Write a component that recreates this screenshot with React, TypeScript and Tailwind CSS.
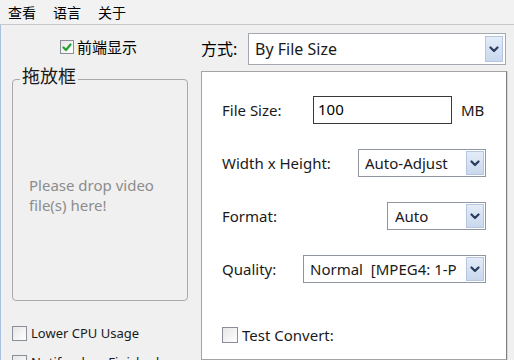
import React from 'react';

const font = { fontFamily: '"Noto Sans", "Noto Sans CJK SC", sans-serif' };

function Chevron() {
  return (
    <svg width="10" height="7" viewBox="0 0 10 7" className="block">
      <path d="M1.5 1.5 L5 5 L8.5 1.5" fill="none" stroke="#2a3d5e" strokeWidth="2.2" strokeLinecap="round" strokeLinejoin="round" />
    </svg>
  );
}

function Select({ value, className }: { value: string; className: string }) {
  return (
    <div className={`flex h-[28px] items-center border border-[#8f969f] bg-white pl-[6px] pr-[1px] ${className}`}>
      <span className="flex-1 overflow-hidden whitespace-pre text-[15px] leading-[20px] text-[#1a1a1a]">{value}</span>
      <div className="flex h-[24px] w-[18px] shrink-0 items-center justify-center border border-[#b4c6e2] bg-gradient-to-b from-[#e3ecf8] to-[#c9d8ee]">
        <Chevron />
      </div>
    </div>
  );
}

function CheckBox({ checked, size = 'w-[14px] h-[14px]' }: { checked?: boolean; size?: string }) {
  return (
    <div className={`flex shrink-0 items-center justify-center border border-[#8a8f97] bg-gradient-to-br from-[#e6e6e6] to-white ${size}`}>
      {checked && (
        <svg width="10" height="9" viewBox="0 0 10 9">
          <path d="M1.5 4.5 L4 7 L8.5 1.5" fill="none" stroke="#24a12a" strokeWidth="2.2" strokeLinecap="round" strokeLinejoin="round" />
        </svg>
      )}
    </div>
  );
}

export default function App() {
  return (
    <div className="h-[360px] w-[514px] overflow-hidden bg-[#f0f0f0] text-black" style={font}>
      {/* menu */}
      <div className="flex h-[25px] items-center gap-[17px] border-b border-[#c8c8c8] bg-[#f2f2f2] pl-[8px] pt-[1px] text-[14px] leading-[20px]">
        <span>查看</span>
        <span>语言</span>
        <span>关于</span>
      </div>

      <div className="flex h-[335px] border-l border-[#a9c1e0]">
        {/* left column */}
        <div className="flex w-[199px] shrink-0 flex-col">
          <div className="mt-[12px] flex h-[20px] items-center gap-[3px] pl-[59px]">
            <CheckBox checked />
            <span className="text-[15px] leading-[20px]">前端显示</span>
          </div>

          <fieldset className="ml-[11px] mt-[8px] w-[176px] rounded-[4px] border border-[#a9a9a9]">
            <legend className="ml-[7px] px-[2px] pb-[6px] text-[18px] leading-[22px] text-[#1a1a1a]">拖放框</legend>
            <div className="h-[207px] pl-[16px] pt-[82px] text-[15px] leading-[20px] text-[#8c8c8c]">
              Please drop video
              <br />
              file(s) here!
            </div>
          </fieldset>

          <div className="mt-[22px] flex h-[20px] items-center gap-[4px] pl-[11px]">
            <CheckBox size="w-[15px] h-[15px]" />
            <span className="text-[13px] leading-[20px] text-[#1a1a1a]">Lower CPU Usage</span>
          </div>
          <div className="mt-[9px] flex h-[20px] items-center gap-[4px] pl-[11px]">
            <CheckBox size="w-[15px] h-[15px]" />
            <span className="text-[13px] leading-[20px] text-[#1a1a1a]">Notify when Finished</span>
          </div>
        </div>

        {/* right column */}
        <div className="flex flex-1 flex-col pl-[1px]">
          <div className="mt-[8px] flex h-[32px] items-center">
            <span className="w-[47px] text-[16px] leading-[20px]">方式:</span>
            <div className="flex h-[32px] w-[258px] items-center border border-[#a3a8b0] bg-white pl-[6px] pr-[2px]">
              <span className="flex-1 text-[16px] leading-[20px] text-[#1a1a1a]">By File Size</span>
              <div className="flex h-[26px] w-[18px] items-center justify-center border border-[#b4c6e2] bg-gradient-to-b from-[#e3ecf8] to-[#c9d8ee]">
                <Chevron />
              </div>
            </div>
          </div>

          <div className="mt-[6px] flex w-[306px] flex-1 flex-col border border-[#a4a4a4] border-r-[#808080] bg-white pl-[20px] pr-[20px] pt-[24px] shadow-[1px_0_0_#d6d6d6]">
            <div className="flex h-[28px] items-center text-[15px] leading-[20px]">
              <span className="w-[91px] text-[#1a1a1a]">File Size:</span>
              <div className="flex h-[28px] w-[139px] items-center border border-[#3a3a3a] pb-[3px] pl-[4px] text-[15px]">100</div>
              <span className="ml-[9px] text-[#1a1a1a]">MB</span>
            </div>

            <div className="mt-[25px] flex h-[28px] items-center text-[15px] leading-[20px]">
              <span className="flex-1 text-[#1a1a1a]">Width x Height:</span>
              <Select value="Auto-Adjust" className="w-[128px]" />
            </div>

            <div className="mt-[25px] flex h-[28px] items-center text-[15px] leading-[20px]">
              <span className="flex-1 text-[#1a1a1a]">Format:</span>
              <Select value="Auto" className="w-[99px] pl-[7px]" />
            </div>

            <div className="mt-[25px] flex h-[28px] items-center text-[15px] leading-[20px]">
              <span className="flex-1 text-[#1a1a1a]">Quality:</span>
              <Select value="Normal  [MPEG4: 1-P" className="w-[183px]" />
            </div>

            <div className="mt-[42px] flex h-[20px] items-center gap-[4px] text-[15px] leading-[20px]">
              <CheckBox size="w-[16px] h-[16px]" />
              <span className="text-[#1a1a1a]">Test Convert:</span>
            </div>
          </div>
        </div>
      </div>
    </div>
  );
}
